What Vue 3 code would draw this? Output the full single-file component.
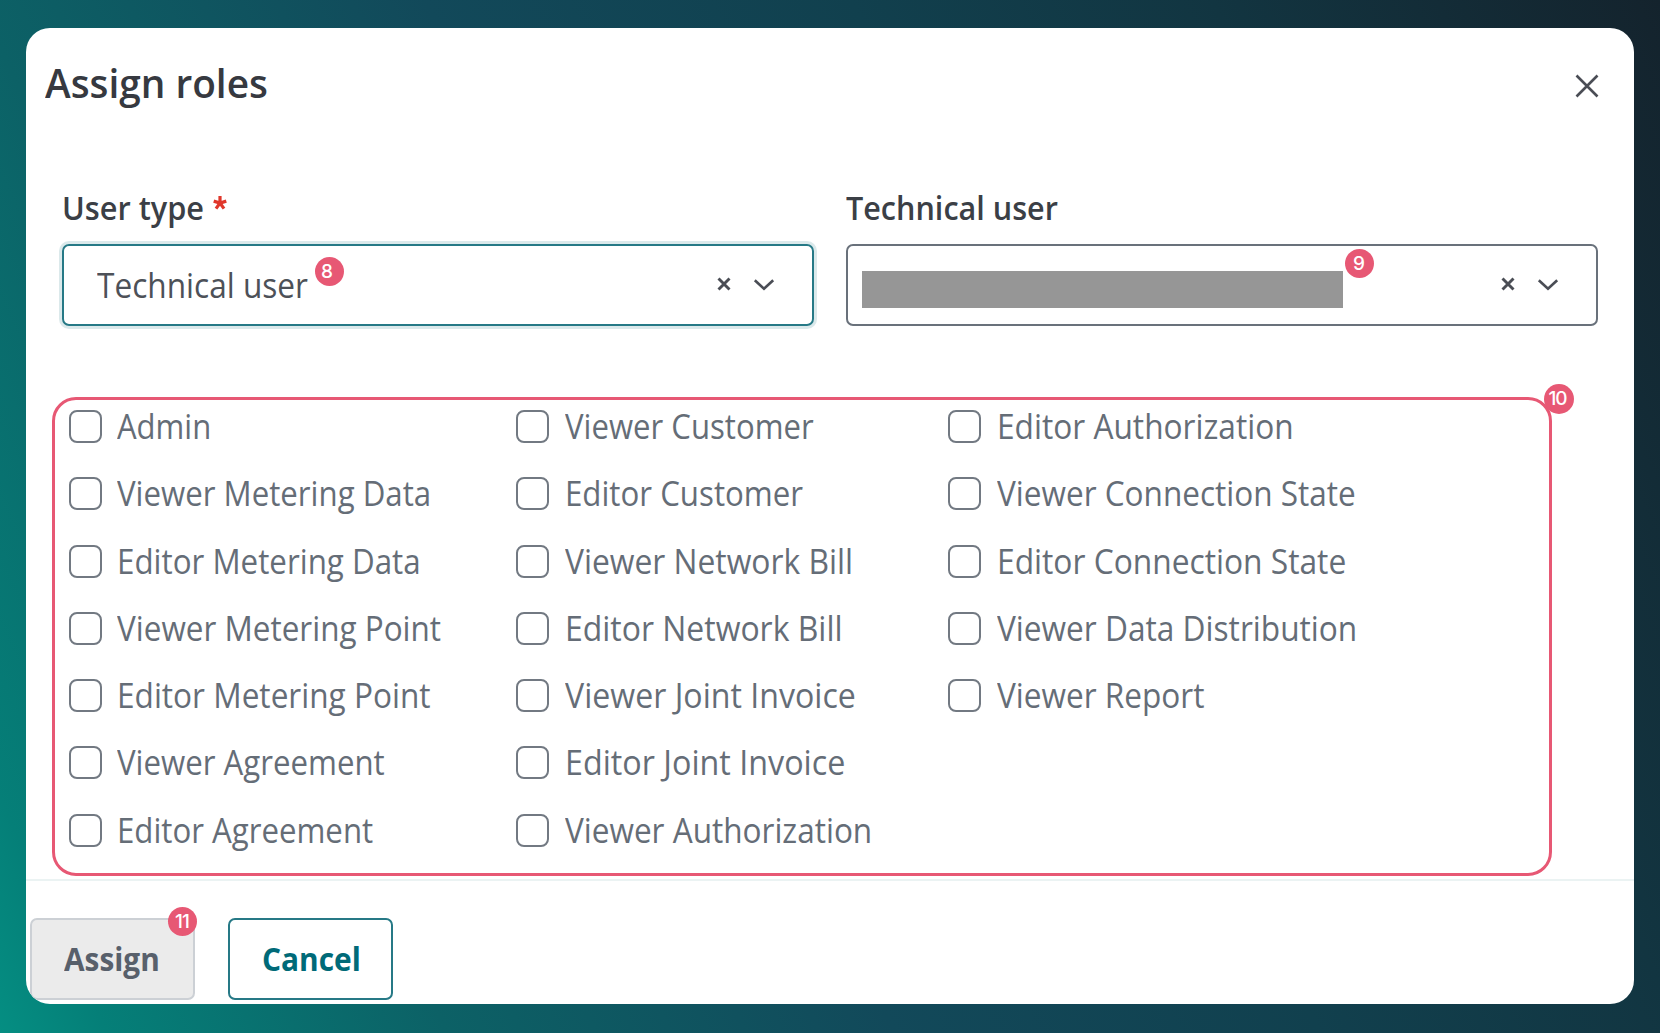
<script setup>
const roleColumns = [
  [
    { name: 'Admin', width: 94 },
    { name: 'Viewer Metering Data', width: 314 },
    { name: 'Editor Metering Data', width: 304 },
    { name: 'Viewer Metering Point', width: 324 },
    { name: 'Editor Metering Point', width: 314 },
    { name: 'Viewer Agreement', width: 268 },
    { name: 'Editor Agreement', width: 256 },
  ],
  [
    { name: 'Viewer Customer', width: 249 },
    { name: 'Editor Customer', width: 238 },
    { name: 'Viewer Network Bill', width: 288 },
    { name: 'Editor Network Bill', width: 278 },
    { name: 'Viewer Joint Invoice', width: 291 },
    { name: 'Editor Joint Invoice', width: 280 },
    { name: 'Viewer Authorization', width: 307 },
  ],
  [
    { name: 'Editor Authorization', width: 297 },
    { name: 'Viewer Connection State', width: 359 },
    { name: 'Editor Connection State', width: 349 },
    { name: 'Viewer Data Distribution', width: 360 },
    { name: 'Viewer Report', width: 207 },
  ],
]

// Condenses a label horizontally to the given width.
const vFit = {
  mounted(el, { value }) {
    el.style.transform = `scaleX(${value / el.offsetWidth})`
  },
}
</script>

<template>
  <main class="backdrop">
    <section class="dialog">
      <header class="header">
        <h1 class="title"><span v-fit="223" class="fit">Assign roles</span></h1>
        <button class="close" aria-label="Close">
          <svg width="24" height="24" viewBox="0 0 24 24"><path d="M1.5 1.5l21 21M22.5 1.5l-21 21" /></svg>
        </button>
      </header>

      <div class="fields">
        <div class="field">
          <div class="label">
            <span class="label-name"><span v-fit="142" class="fit">User type</span></span>
            <svg class="required" width="14" height="14" viewBox="0 0 14 14"><path d="M7 0v7M.7 5.1L7 7l6.3-1.9M3 12.6L7 7l4 5.6" /></svg>
          </div>
          <div class="select focused">
            <span v-fit="211" class="fit value">Technical user</span>
            <span class="badge b8">8</span>
            <svg class="clear" width="14" height="14" viewBox="0 0 14 14"><path d="M1.5 1.5l11 11M12.5 1.5l-11 11" /></svg>
            <svg class="chevron" width="22" height="12" viewBox="0 0 22 12"><path d="M1.8 1.2l9.2 8.6 9.2-8.6" /></svg>
          </div>
        </div>
        <div class="field">
          <div class="label"><span v-fit="212" class="fit">Technical user</span></div>
          <div class="select">
            <span class="redacted"></span>
            <span class="badge b9">9</span>
            <svg class="clear" width="14" height="14" viewBox="0 0 14 14"><path d="M1.5 1.5l11 11M12.5 1.5l-11 11" /></svg>
            <svg class="chevron" width="22" height="12" viewBox="0 0 22 12"><path d="M1.8 1.2l9.2 8.6 9.2-8.6" /></svg>
          </div>
        </div>
      </div>

      <div class="roles">
        <div v-for="(column, i) in roleColumns" :key="i" class="column">
          <label v-for="role in column" :key="role.name" class="role">
            <span class="box"></span>
            <span v-fit="role.width" class="fit role-name">{{ role.name }}</span>
          </label>
        </div>
        <span class="badge b10">10</span>
      </div>

      <footer class="footer">
        <button class="button assign">
          <span v-fit="96" class="fit">Assign</span>
          <span class="badge b11">11</span>
        </button>
        <button class="button cancel"><span v-fit="99" class="fit">Cancel</span></button>
      </footer>
    </section>
  </main>
</template>

<style>
body {
  margin: 0;
}
</style>

<style scoped>
* {
  box-sizing: border-box;
}
.backdrop {
  width: 1660px;
  height: 1033px;
  padding: 28px 26px 29px;
  overflow: hidden;
  font-family: 'Open Sans', 'Noto Sans', sans-serif;
  background: linear-gradient(65.6deg, #058e82 0%, #057f78 5%, #0c6166 21%, #12495a 42%, #11404e 62%, #123541 79%, #14232d 100%);
}
.dialog {
  display: flex;
  flex-direction: column;
  height: 976px;
  overflow: hidden;
  background: #fff;
  border-radius: 24px;
}
.fit {
  display: inline-block;
  flex: none;
  white-space: nowrap;
  transform-origin: 0 50%;
}
.header {
  display: flex;
  justify-content: space-between;
  align-items: center;
  height: 108px;
  padding: 0 33px 0 19px;
}
.title {
  margin: 1px 0 0;
  color: #363940;
  font-size: 40px;
  font-weight: 600;
  line-height: 54px;
}
.close {
  display: flex;
  padding: 0;
  margin-top: 7px;
  background: none;
  border: 0;
}
svg {
  flex: none;
  fill: none;
  stroke: #4a4d55;
  stroke-width: 2.6;
}
.close svg {
  margin-right: 2px;
}
.fields {
  display: flex;
  gap: 32px;
  padding: 50px 36px 0;
}
.field {
  width: 752px;
}
.label {
  display: flex;
  height: 44px;
  margin-bottom: 14px;
  color: #3b3f46;
  font-size: 32px;
  font-weight: 600;
  line-height: 44px;
}
.label-name {
  width: 151px;
}
.required {
  margin-top: 10px;
  stroke: #e0372b;
  stroke-width: 3.2;
}
.select {
  position: relative;
  display: flex;
  align-items: center;
  height: 82px;
  padding: 0 37px 0 14px;
  border: 2px solid #69717b;
  border-radius: 7px;
}
.focused {
  padding-left: 33px;
  border-color: #267986;
  box-shadow: 0 0 0 3px #dbe9eb;
}
.value {
  color: #4d5158;
  font-size: 34px;
  line-height: 46px;
}
.redacted {
  width: 481px;
  height: 37px;
  margin-top: 8px;
  background: #969696;
}
.clear {
  margin: 0 22px 2px auto;
  stroke-width: 2.9;
}
.chevron {
  margin-bottom: 1px;
}
.badge {
  position: absolute;
  display: flex;
  align-items: center;
  justify-content: center;
  width: 29px;
  height: 29px;
  color: #fff;
  background: #e75874;
  border-radius: 50%;
  font: 500 19px/29px Inter, sans-serif;
}
.b8 {
  top: 11px;
  left: 251px;
  padding-right: 5px;
}
.b9 {
  top: 3px;
  left: 497px;
  padding-right: 1px;
}
.b10 {
  top: -16px;
  right: -25px;
  width: 30px;
  height: 30px;
  padding: 0 3px 2px 0;
  letter-spacing: -1px;
}
.b11 {
  top: -13px;
  right: -4px;
  padding-right: 1px;
  letter-spacing: -1px;
}
.roles {
  position: relative;
  display: flex;
  width: 1500px;
  height: 479px;
  margin: 71px 0 0 26px;
  padding: 10px 0 0 14px;
  border: 3px solid #e75874;
  border-radius: 24px;
}
.column {
  width: 447px;
}
.column:nth-child(2) {
  width: 432px;
}
.role {
  display: flex;
  align-items: center;
  gap: 15px;
  height: 33px;
  margin-bottom: 34.3px;
  color: #656d77;
  font-size: 34px;
  line-height: 33px;
}
.column:nth-child(n + 2) .role {
  gap: 16px;
}
.box {
  flex: none;
  width: 33px;
  height: 33px;
  border: 2px solid #727982;
  border-radius: 8px;
}
.footer {
  display: flex;
  gap: 33px;
  margin-top: 3px;
  padding: 37px 4px 0;
  border-top: 2px solid #ebf3f3;
}
.button {
  position: relative;
  display: flex;
  align-items: center;
  width: 165px;
  height: 82px;
  padding: 0 0 0 32px;
  border: 2px solid #267986;
  border-radius: 7px;
  background: #fff;
  color: #006a78;
  font: 700 32px/44px 'Open Sans', sans-serif;
}
.assign {
  background: #ebebeb;
  border-color: #ccd0d5;
  color: #58606b;
}
</style>
